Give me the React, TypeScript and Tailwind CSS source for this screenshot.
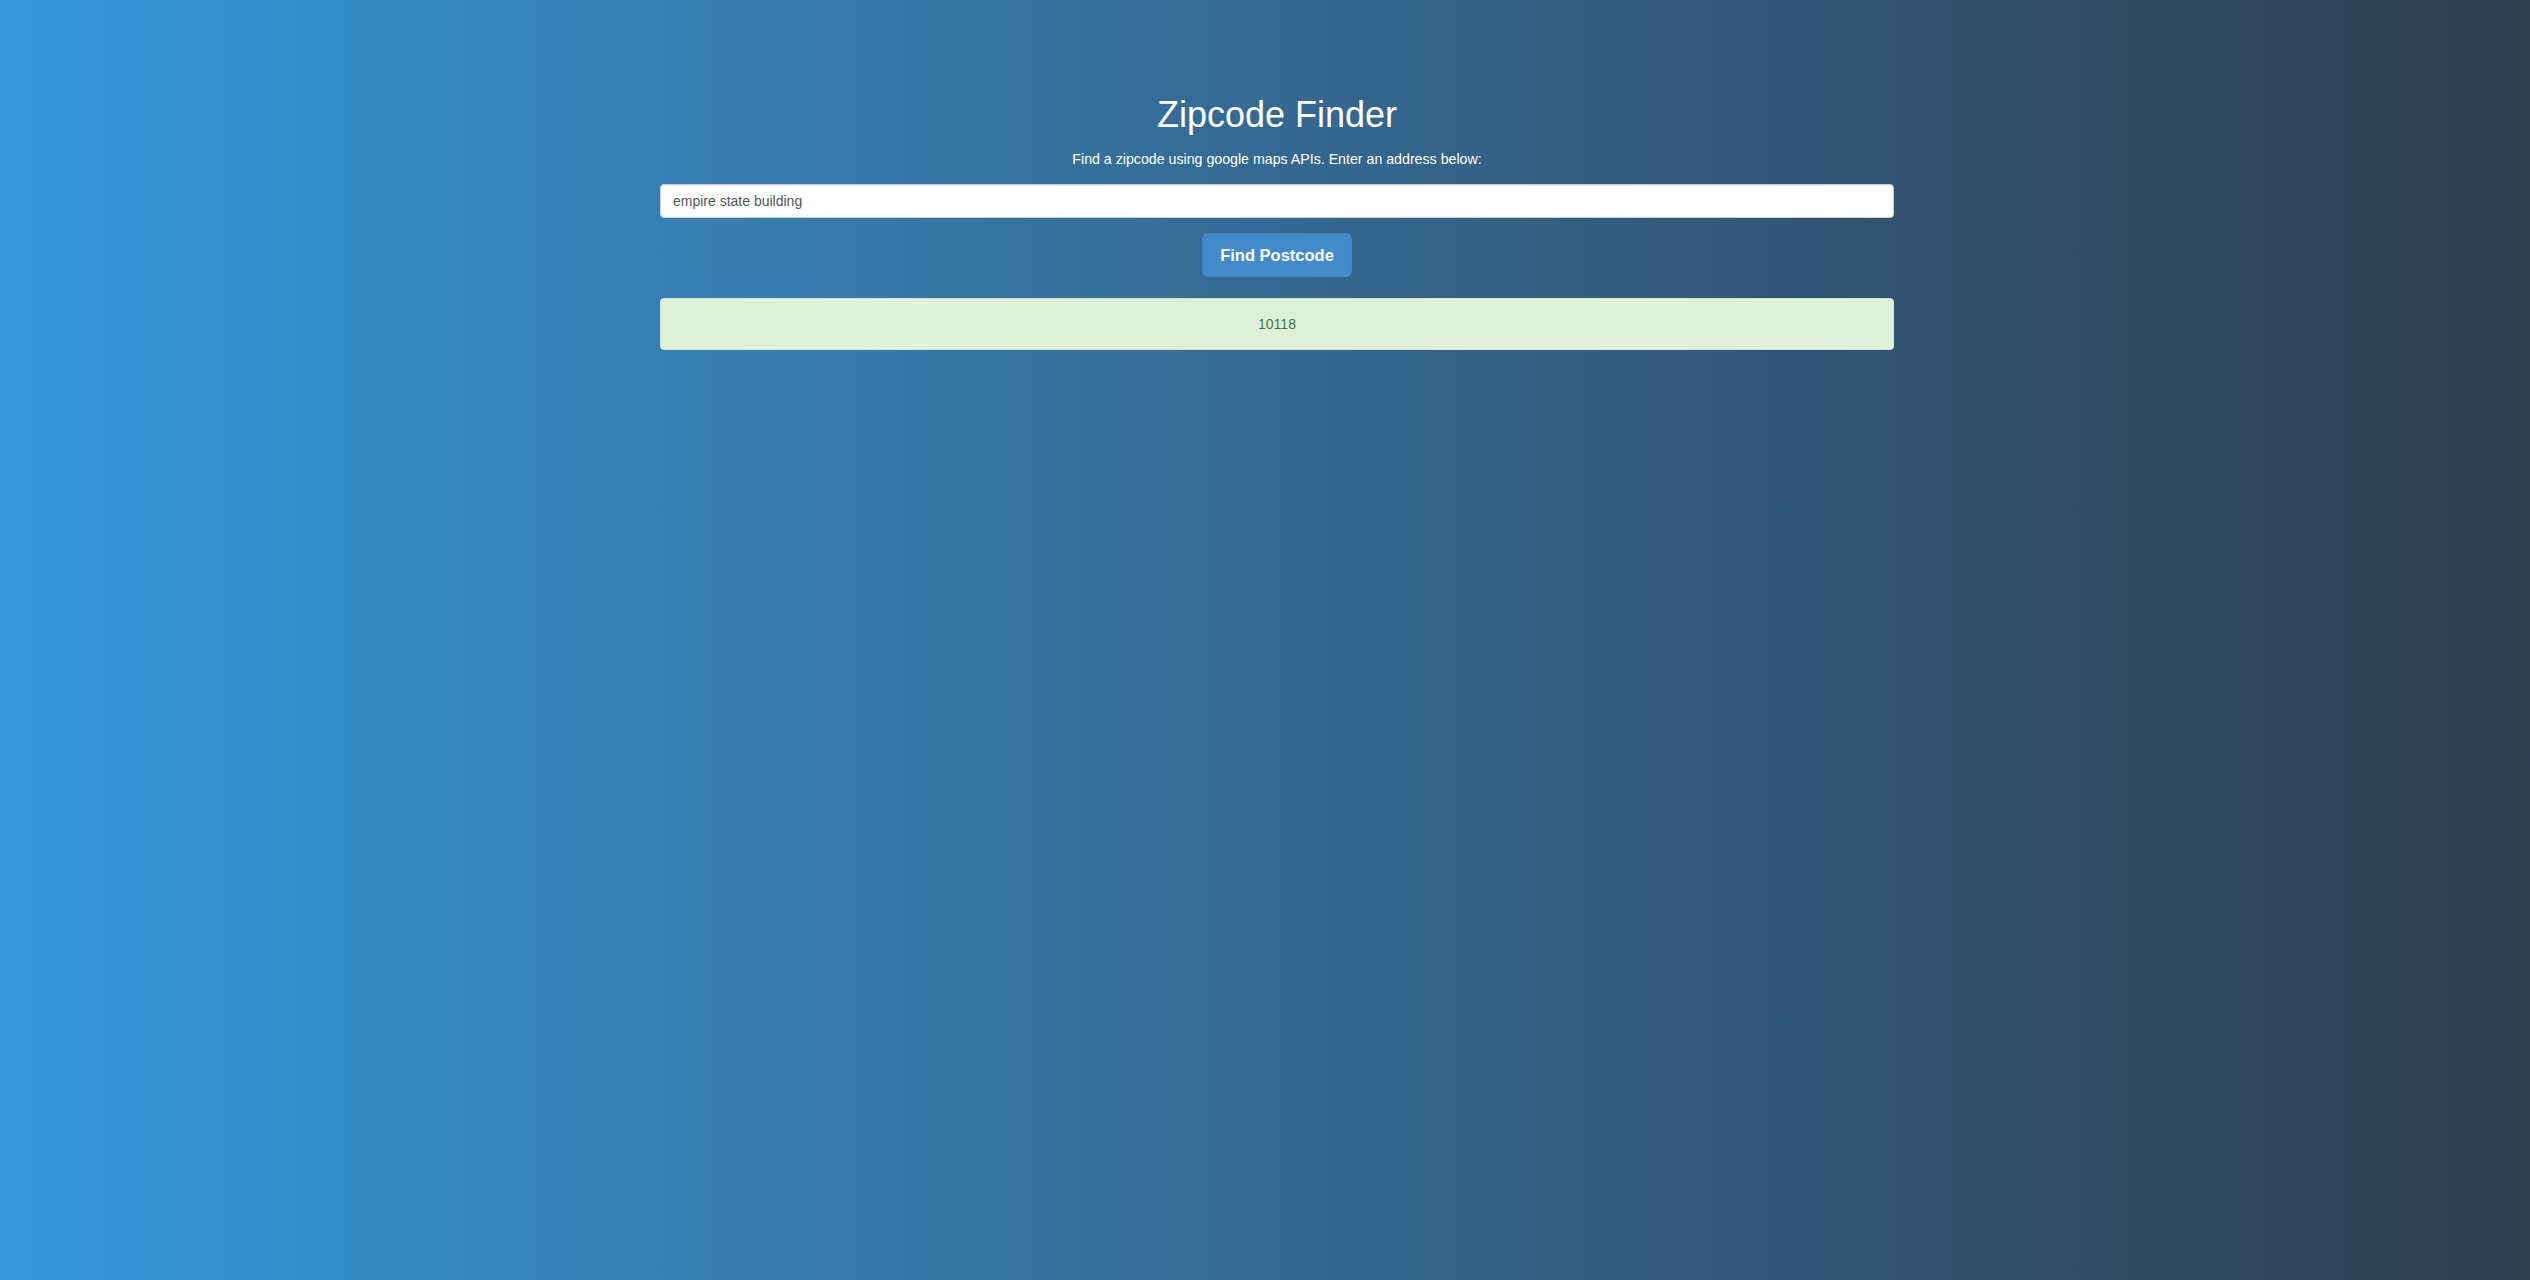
import { useState } from "react";

const FONT = { fontFamily: '"Liberation Sans", Arial, Helvetica, sans-serif' };

export default function App() {
  const [address, setAddress] = useState("empire state building");

  return (
    <div
      className="min-h-[1280px] w-full bg-gradient-to-r from-[#3498db] to-[#2c3e50] pl-[24px] text-white"
      style={FONT}
    >
      <div className="mx-auto flex w-[1234px] flex-col items-center pt-[95px]">
        <h1 className="text-[36px] leading-[40px] font-normal">Zipcode Finder</h1>
        <p className="mt-[14px] text-[14.2px] leading-[20px]">
          Find a zipcode using google maps APIs. Enter an address below:
        </p>

        <input
          className="mt-[15px] h-[34px] w-full rounded-[4px] border border-[#cccccc] bg-white px-[12px] text-[14px] text-[#555555] shadow-[inset_0_1px_1px_rgba(0,0,0,0.075)] outline-none"
          style={FONT}
          value={address}
          onChange={(e) => setAddress(e.target.value)}
        />

        <button
          className="mt-[15px] flex h-[44px] w-[150px] items-center justify-center rounded-[6px] border border-[#3f87c6] bg-[#428bca] text-[16.5px] font-bold text-white"
          style={FONT}
        >
          Find Postcode
        </button>

        <div className="mt-[21px] flex h-[52px] w-full items-center justify-center rounded-[4px] border border-[#d6e9c6] bg-[#dff0d8] text-[14px] text-[#3c763d]">
          10118
        </div>
      </div>
    </div>
  );
}
